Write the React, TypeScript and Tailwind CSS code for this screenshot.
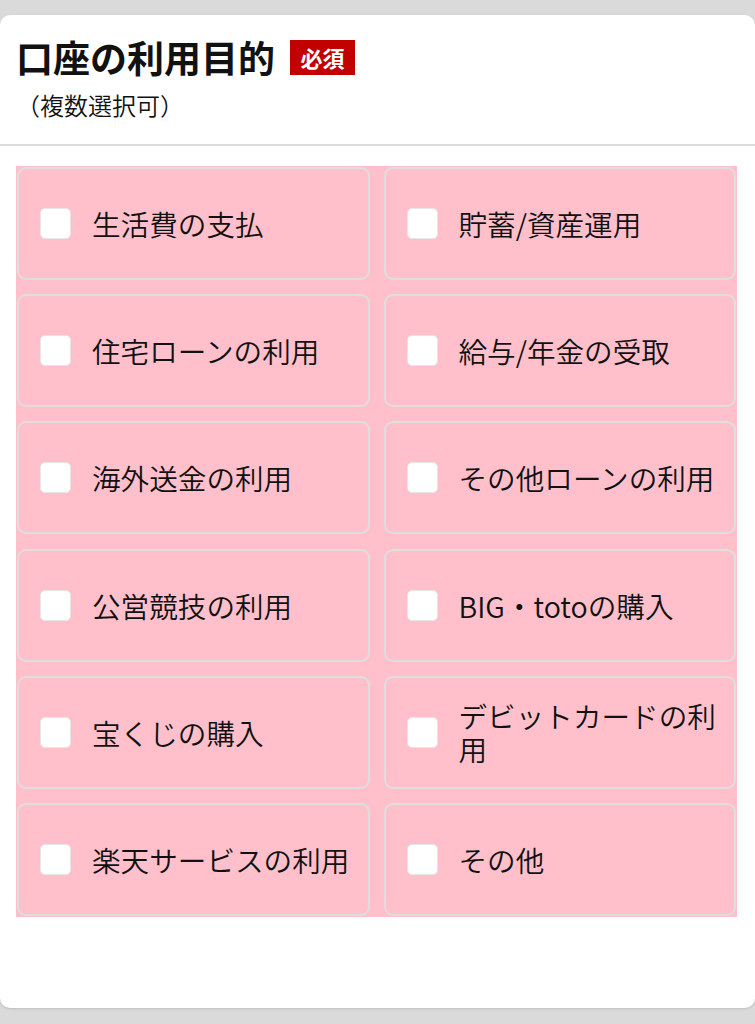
import { useState } from "react";

const purposes = [
	"生活費の支払",
	"貯蓄/資産運用",
	"住宅ローンの利用",
	"給与/年金の受取",
	"海外送金の利用",
	"その他ローンの利用",
	"公営競技の利用",
	"BIG・totoの購入",
	"宝くじの購入",
	"デビットカードの利用",
	"楽天サービスの利用",
	"その他",
];

function PurposeOption({ label }: { label: string }) {
	const [checked, setChecked] = useState(false);
	return (
		<label className="h-[113px] flex items-center gap-[21px] pl-[21px] pr-[10px] border-2 border-[#dedede] rounded-[9px] cursor-pointer">
			<input
				type="checkbox"
				className="sr-only"
				checked={checked}
				onChange={() => setChecked(!checked)}
			/>
			<span
				className={`shrink-0 w-[31px] h-[31px] rounded-[5px] border border-[#e6e6e6] ${
					checked ? "bg-[#bf0000]" : "bg-white"
				}`}
			/>
			<span className="text-[28.6px] leading-[33px] font-[350] text-[#111]">
				{label}
			</span>
		</label>
	);
}

export default function App() {
	return (
		<div
			className="min-h-[1024px] bg-[#dadada] pt-[15px]"
			style={{ fontFamily: '"Noto Sans CJK JP", "Noto Sans", sans-serif' }}
		>
			<div className="h-[993px] bg-white rounded-[10px] shadow-sm">
				<div className="pt-5 pb-[24px] pl-4 border-b-2 border-[#dcdcdc]">
					<div className="flex items-center gap-[15px]">
						<h2 className="text-[37px] leading-[44px] font-bold text-[#111]">
							口座の利用目的
						</h2>
						<span className="h-[35px] w-[65px] flex items-center justify-center bg-[#c20000] text-white text-[22px] font-bold leading-none">
							必須
						</span>
					</div>
					<p className="mt-[11px] text-[24px] leading-[30px] font-[350] text-[#111]">
						（複数選択可）
					</p>
				</div>
				<div className="mt-5 ml-4 mr-[18px] p-[1px] bg-[#ffc0cb] grid grid-cols-2 gap-x-[14px] gap-y-[14.2px]">
					{purposes.map((p) => (
						<PurposeOption key={p} label={p} />
					))}
				</div>
			</div>
		</div>
	);
}
